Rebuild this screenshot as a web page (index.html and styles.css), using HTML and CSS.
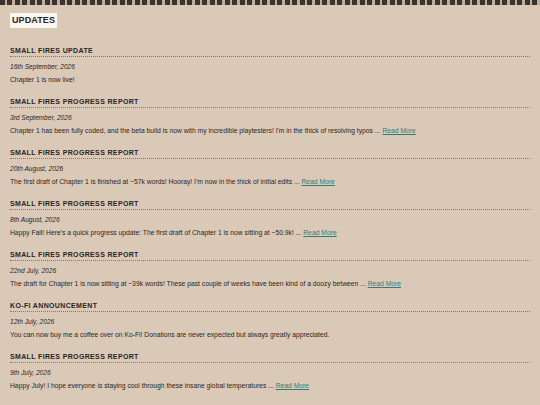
FILE: index.html
```html
<!DOCTYPE html>
<html lang="en">
<head>
    <meta charset="UTF-8">
    <title>Updates</title>
    <link rel="stylesheet" href="styles.css">
</head>
<body>
<div class="strip"></div>
<div class="container">
    <h1 class="title">Updates</h1>

    <div class="post">
        <h2>Small Fires Update</h2>
        <p class="date">16th September, 2026</p>
        <p class="text">Chapter 1 is now live!</p>
    </div>

    <div class="post">
        <h2>Small Fires Progress Report</h2>
        <p class="date">3rd September, 2026</p>
        <p class="text">Chapter 1 has been fully coded, and the beta build is now with my incredible playtesters! I'm in the thick of resolving typos ... <a href="#">Read More</a></p>
    </div>

    <div class="post">
        <h2>Small Fires Progress Report</h2>
        <p class="date">20th August, 2026</p>
        <p class="text">The first draft of Chapter 1 is finished at ~57k words! Hooray! I'm now in the thick of initial edits ... <a href="#">Read More</a></p>
    </div>

    <div class="post">
        <h2>Small Fires Progress Report</h2>
        <p class="date">8th August, 2026</p>
        <p class="text">Happy Fall! Here's a quick progress update: The first draft of Chapter 1 is now sitting at ~50.9k! ... <a href="#">Read More</a></p>
    </div>

    <div class="post">
        <h2>Small Fires Progress Report</h2>
        <p class="date">22nd July, 2026</p>
        <p class="text">The draft for Chapter 1 is now sitting at ~39k words! These past couple of weeks have been kind of a doozy between ... <a href="#">Read More</a></p>
    </div>

    <div class="post">
        <h2>Ko-Fi Announcement</h2>
        <p class="date">12th July, 2026</p>
        <p class="text">You can now buy me a coffee over on Ko-Fi! Donations are never expected but always greatly appreciated.</p>
    </div>

    <div class="post">
        <h2>Small Fires Progress Report</h2>
        <p class="date">9th July, 2026</p>
        <p class="text">Happy July! I hope everyone is staying cool through these insane global temperatures ... <a href="#">Read More</a></p>
    </div>

    <div class="post">
        <h2>Small Fires Update</h2>
        <p class="date">1st July, 2026</p>
        <p class="text">Small Fires now has a page!</p>
    </div>
</div>
</body>
</html>
```

FILE: styles.css
```css
body {
    margin: 0;
    background-color: #dbc9b8;
    color: #2b2520;
    font-family: "Liberation Sans", Arial, sans-serif;
}

.strip {
    height: 5px;
    background: repeating-linear-gradient(to right, #3b332d 0 5px, #bfae9d 5px 7.5px);
}

.container {
    padding: 8px 10px 10px;
}

.title {
    width: fit-content;
    margin: 0 0 18px;
    padding: 2px;
    background-color: #fbf7f0;
    font-size: 9px;
    line-height: 11px;
    letter-spacing: 0.1px;
    text-transform: uppercase;
}

.post {
    margin-bottom: 12px;
}

.post h2 {
    margin: 0;
    padding-bottom: 1px;
    border-bottom: 1px dotted #85796f;
    font-size: 7px;
    line-height: 9px;
    letter-spacing: 0.35px;
    text-transform: uppercase;
}

.date {
    margin: 5px 0 0;
    font-size: 6.6px;
    line-height: 10px;
    font-style: italic;
}

.text {
    margin: 3px 0 0;
    font-size: 6.75px;
    line-height: 10px;
}

.text a {
    color: #2d7d78;
}
```
